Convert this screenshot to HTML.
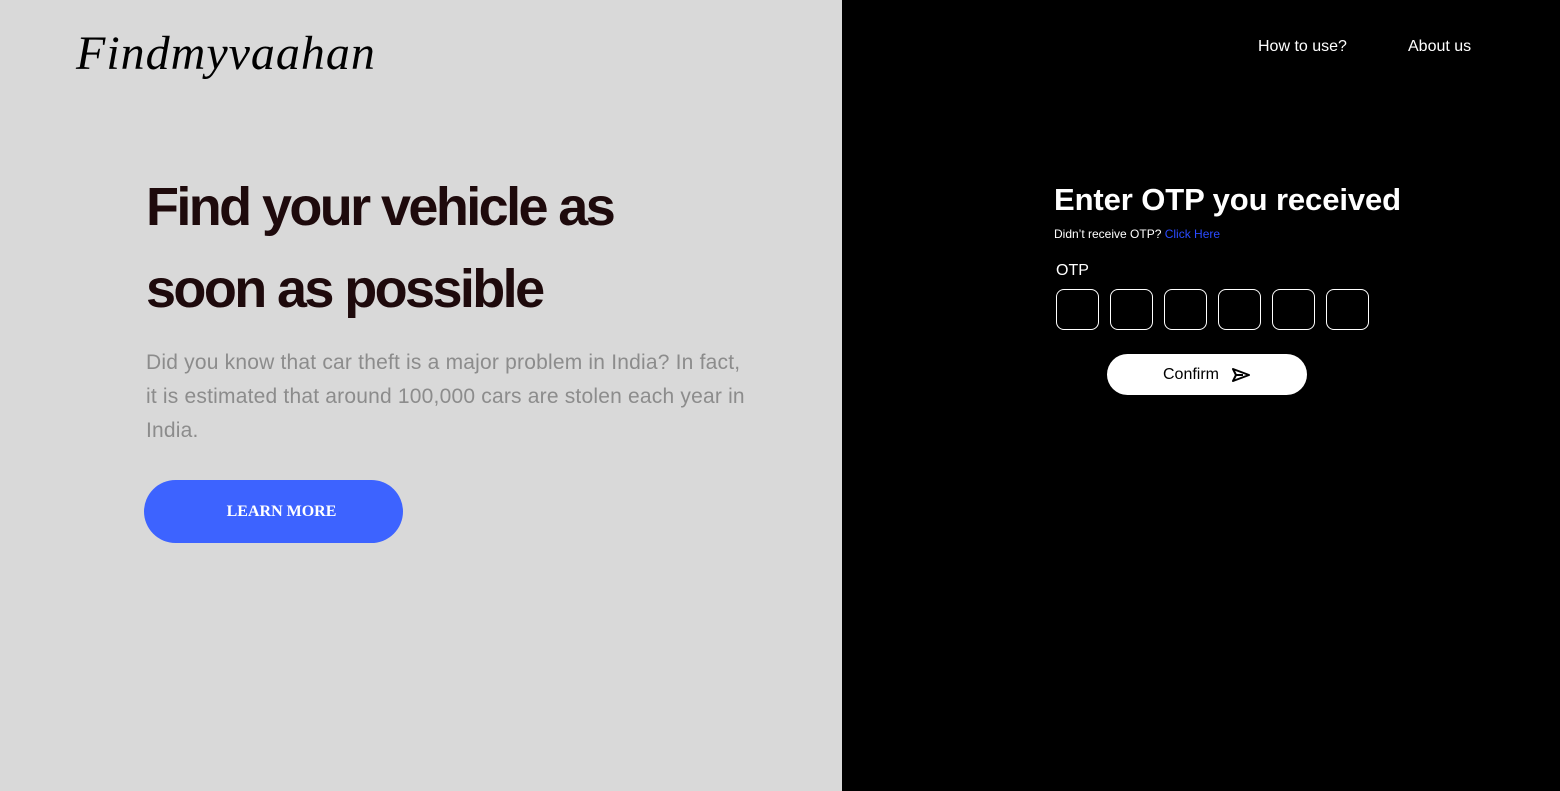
<!DOCTYPE html>
<html><head><meta charset="utf-8"><style>
*{margin:0;padding:0;box-sizing:border-box}
body{width:1560px;height:791px;overflow:hidden;position:relative;font-family:"Liberation Sans",sans-serif}
.left{position:absolute;left:0;top:0;width:842px;height:791px;background:#d9d9d9}
.right{position:absolute;left:842px;top:0;width:718px;height:791px;background:#000}
.logo{position:absolute;left:76px;top:26px;font-family:"Liberation Serif",serif;font-style:italic;font-size:48px;color:#000;letter-spacing:1px}
h1{position:absolute;left:146px;top:166px;font-size:54px;line-height:82px;color:#1e0a0c;font-weight:bold;letter-spacing:-2.6px;white-space:nowrap}
p.d{position:absolute;left:146px;top:346px;font-size:21px;line-height:34px;color:#8c8c8c;white-space:nowrap;letter-spacing:0.2px}
.btn{position:absolute;left:144px;top:480px;width:259px;height:63px;border-radius:32px;background:#3d63ff;color:#fff;font-family:"Liberation Serif",serif;font-weight:bold;font-size:16px;display:flex;align-items:center;justify-content:center;padding-left:16px}
.nav{position:absolute;top:38px;color:#fff;font-size:16px}
.t{position:absolute;left:1054px;top:182px;color:#fff;font-weight:bold;font-size:31px;letter-spacing:-0.1px}
.s{position:absolute;left:1054px;top:227px;color:#fff;font-size:12px}
.s span{color:#2b4bff}
.o{position:absolute;left:1056px;top:262px;color:#fff;font-size:16px}
.box{position:absolute;top:289px;width:43px;height:41px;border:1px solid #fff;border-radius:8px}
.cf{position:absolute;left:1107px;top:354px;width:200px;height:41px;border-radius:21px;background:#fff;display:flex;align-items:center;justify-content:center;font-size:16px;color:#000;gap:12px}
</style></head><body>
<div class="left">
<div class="logo">Findmyvaahan</div>
<h1>Find your vehicle as<br>soon as possible</h1>
<p class="d">Did you know that car theft is a major problem in India? In fact,<br>it is estimated that around 100,000 cars are stolen each year in<br>India.</p>
<div class="btn">LEARN MORE</div>
</div>
<div class="right"></div>
<div class="nav" style="left:1258px">How to use?</div>
<div class="nav" style="left:1408px">About us</div>
<div class="t">Enter OTP you received</div>
<div class="s">Didn’t receive OTP? <span>Click Here</span></div>
<div class="o">OTP</div>
<div class="box" style="left:1056px"></div>
<div class="box" style="left:1110px"></div>
<div class="box" style="left:1164px"></div>
<div class="box" style="left:1218px"></div>
<div class="box" style="left:1272px"></div>
<div class="box" style="left:1326px"></div>
<div class="cf"><span>Confirm</span><svg width="20" height="16" viewBox="0 0 20 16"><path d="M2 2 L18 8 L2 14 L5 8 Z M5 8 H12" fill="none" stroke="#000" stroke-width="2" stroke-linejoin="round"/></svg></div>
</body></html>
